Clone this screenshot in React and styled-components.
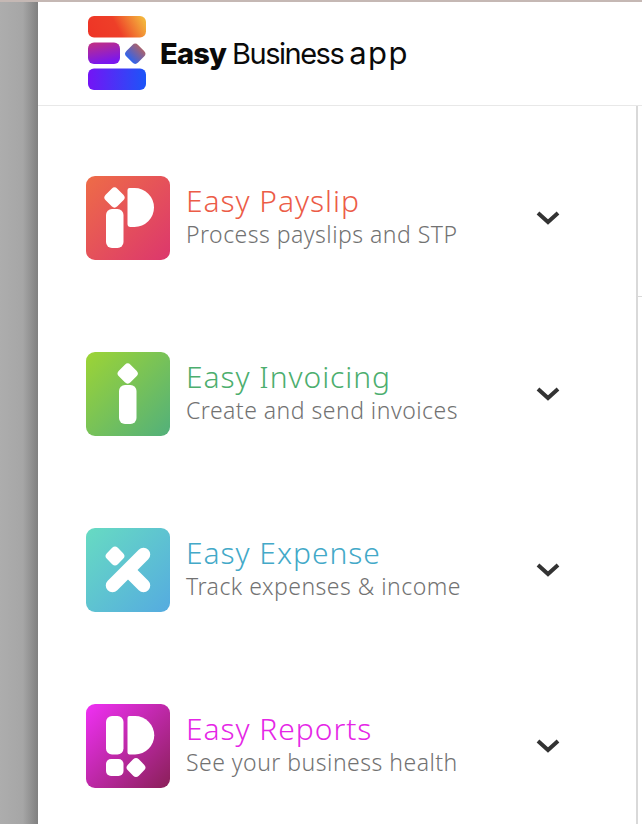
import React from 'react';
import styled, { createGlobalStyle } from 'styled-components';

const GlobalStyle = createGlobalStyle`
    html, body {
        margin: 0;
        padding: 0;
        background: #fff;
    }
`;

const Page = styled.div`
    width: 642px;
    height: 824px;
    overflow: hidden;
    display: flex;
    flex-direction: column;
`;

const TopStrip = styled.div`
    height: 2px;
    flex: none;
    background: #c5b8b4;
`;

const Main = styled.div`
    flex: 1;
    display: flex;
    min-height: 0;
`;

const Backdrop = styled.div`
    width: 38px;
    flex: none;
    background: linear-gradient(90deg, #adadad 0%, #a6a6a6 60%, #808080 100%);
`;

const Drawer = styled.div`
    flex: 1;
    display: flex;
    flex-direction: column;
    min-width: 0;
`;

const Header = styled.div`
    height: 104px;
    flex: none;
    display: flex;
    align-items: center;
    padding: 0 0 1px 50px;
    box-sizing: border-box;
    border-bottom: 1px solid #e8e8e8;
`;

const Brand = styled.div`
    display: flex;
    align-items: center;
    gap: 13px;
    font-family: Inter, "Liberation Sans", sans-serif;
    font-size: 29px;
    line-height: 34px;
    color: #0a0a0a;
    white-space: nowrap;
`;

const BrandWords = styled.div`
    display: flex;
    align-items: baseline;
    gap: 6px;
`;

const BrandStrong = styled.span`
    font-weight: 800;
    letter-spacing: -0.8px;
`;

const BrandLight = styled.span`
    font-weight: 400;
    font-size: ${props => props.size};
    letter-spacing: ${props => props.spacing};
`;

const Body = styled.div`
    flex: 1;
    display: flex;
    min-height: 0;
`;

const List = styled.div`
    flex: 1;
    display: flex;
    flex-direction: column;
    gap: 92px;
    padding: 70px 0 0 48px;
    border-right: 2px solid #d9d9d9;
`;

const Peek = styled.div`
    width: 4px;
    flex: none;
`;

const PeekLine = styled.div`
    height: 1px;
    margin-top: 190px;
    background: #d9d9d9;
`;

const Row = styled.div`
    display: flex;
    align-items: center;
    height: 84px;
    flex: none;
`;

const IconBox = styled.svg`
    width: 84px;
    height: 84px;
    flex: none;
    display: block;
`;

const Label = styled.div`
    flex: 1;
    padding-left: 16px;
    font-family: "Noto Sans", "Liberation Sans", sans-serif;
    margin-top: -1px;
`;

const Title = styled.div`
    font-size: 30px;
    line-height: 33px;
    font-weight: 300;
    letter-spacing: 0.95px;
    color: ${props => props.color};
    white-space: nowrap;
`;

const Sub = styled.div`
    font-size: 23px;
    line-height: 35px;
    font-weight: 300;
    letter-spacing: 0.48px;
    color: #727272;
    white-space: nowrap;
`;

const Chevron = styled.svg`
    width: 26px;
    height: 18px;
    flex: none;
    margin-right: 75px;
    display: block;
`;

const Tile = ({ id, from, to, children }) => (
    <IconBox viewBox="0 0 84 84">
        <defs>
            <linearGradient id={id} x1="0" y1="0" x2="1" y2="1">
                <stop offset="0" stopColor={from} />
                <stop offset="1" stopColor={to} />
            </linearGradient>
        </defs>
        <rect width="84" height="84" rx="9" fill={`url(#${id})`} />
        <g fill="#fff">{children}</g>
    </IconBox>
);

// rounded square turned 45deg
const Diamond = ({ cx, cy, size = 16.5 }) => (
    <rect
        x={cx - size / 2}
        y={cy - size / 2}
        width={size}
        height={size}
        rx="4"
        transform={`rotate(45 ${cx} ${cy})`}
    />
);

const PayslipIcon = () => (
    <Tile id="payslip" from="#ee6c47" to="#dc376d">
        <Diamond cx={28.5} cy={21.5} />
        <rect x="20" y="33" width="17.5" height="39" rx="6" />
        <path d="M41.5 14a2 2 0 0 1 2-2h5a19.5 19.5 0 0 1 0 39h-4a3 3 0 0 1-3-3z" />
    </Tile>
);

const InvoicingIcon = () => (
    <Tile id="invoicing" from="#9dd435" to="#52b07b">
        <Diamond cx={41.7} cy={21.5} />
        <rect x="33" y="33" width="17.5" height="39" rx="6" />
    </Tile>
);

const ExpenseIcon = () => (
    <Tile id="expense" from="#67dbc2" to="#55abe0">
        <Diamond cx={29} cy={28} size={15.5} />
        <g stroke="#fff" strokeWidth="13.5" strokeLinecap="round">
            <line x1="57.5" y1="26.5" x2="26.5" y2="57.5" />
            <line x1="43" y1="43" x2="57.5" y2="57.5" />
        </g>
    </Tile>
);

const ReportsIcon = () => (
    <Tile id="reports" from="#f030f5" to="#8a2058">
        <rect x="20" y="12" width="17.5" height="38.5" rx="6" />
        <path d="M41.5 14a2 2 0 0 1 2-2h5.5a19.25 19.25 0 0 1 0 38.5h-5.5a2 2 0 0 1-2-2z" />
        <rect x="20" y="55" width="17.5" height="17" rx="5" />
        <Diamond cx={50} cy={63.5} size={15.5} />
    </Tile>
);

const Logo = () => (
    <svg width="59" height="75" viewBox="0 0 59 75" style={{ display: 'block' }}>
        <defs>
            <linearGradient id="logoTop" x1="0" y1="0.6" x2="1" y2="0.4">
                <stop offset="0" stopColor="#ee3526" />
                <stop offset="0.5" stopColor="#ee3f28" />
                <stop offset="1" stopColor="#f3b33c" />
            </linearGradient>
            <linearGradient id="logoMid" x1="0" y1="0" x2="0.3" y2="1">
                <stop offset="0" stopColor="#c4307f" />
                <stop offset="1" stopColor="#7a17ee" />
            </linearGradient>
            <linearGradient id="logoGem" x1="0.5" y1="0" x2="0.5" y2="1">
                <stop offset="0" stopColor="#a9626e" />
                <stop offset="1" stopColor="#2f63ee" />
            </linearGradient>
            <linearGradient id="logoBottom" x1="0" y1="0" x2="1" y2="0">
                <stop offset="0" stopColor="#7414f5" />
                <stop offset="1" stopColor="#1c55f8" />
            </linearGradient>
        </defs>
        <rect x="0" y="0" width="58" height="21.5" rx="6" fill="url(#logoTop)" />
        <rect x="0" y="26.5" width="32" height="21.5" rx="6" fill="url(#logoMid)" />
        <rect
            x="39"
            y="29.5"
            width="16.5"
            height="16.5"
            rx="4"
            fill="url(#logoGem)"
            transform="rotate(45 47.25 37.75)"
        />
        <rect x="0" y="52.5" width="58" height="21.5" rx="6" fill="url(#logoBottom)" />
    </svg>
);

const ArrowDown = () => (
    <Chevron viewBox="0 0 26 18">
        <polyline
            points="3,4 13,13 23,4"
            fill="none"
            stroke="#333"
            strokeWidth="4"
        />
    </Chevron>
);

const products = [
    { name: 'Easy Payslip', text: 'Process payslips and STP', color: '#ec5c47', Icon: PayslipIcon },
    { name: 'Easy Invoicing', text: 'Create and send invoices', color: '#4cae6e', Icon: InvoicingIcon },
    { name: 'Easy Expense', text: 'Track expenses & income', color: '#43a9c8', Icon: ExpenseIcon },
    { name: 'Easy Reports', text: 'See your business health', color: '#e526e6', Icon: ReportsIcon },
];

const App = () => (
    <Page>
        <GlobalStyle />
        <TopStrip />
        <Main>
            <Backdrop />
            <Drawer>
                <Header>
                    <Brand>
                        <Logo />
                        <BrandWords>
                            <BrandStrong>Easy</BrandStrong>
                            <BrandLight size="29px" spacing="-1.5px">Business</BrandLight>
                            <BrandLight size="31px" spacing="1.4px">app</BrandLight>
                        </BrandWords>
                    </Brand>
                </Header>
                <Body>
                    <List>
                        {products.map(({ name, text, color, Icon }) => (
                            <Row key={name}>
                                <Icon />
                                <Label>
                                    <Title color={color}>{name}</Title>
                                    <Sub>{text}</Sub>
                                </Label>
                                <ArrowDown />
                            </Row>
                        ))}
                    </List>
                    <Peek>
                        <PeekLine />
                    </Peek>
                </Body>
            </Drawer>
        </Main>
    </Page>
);

export default App;
